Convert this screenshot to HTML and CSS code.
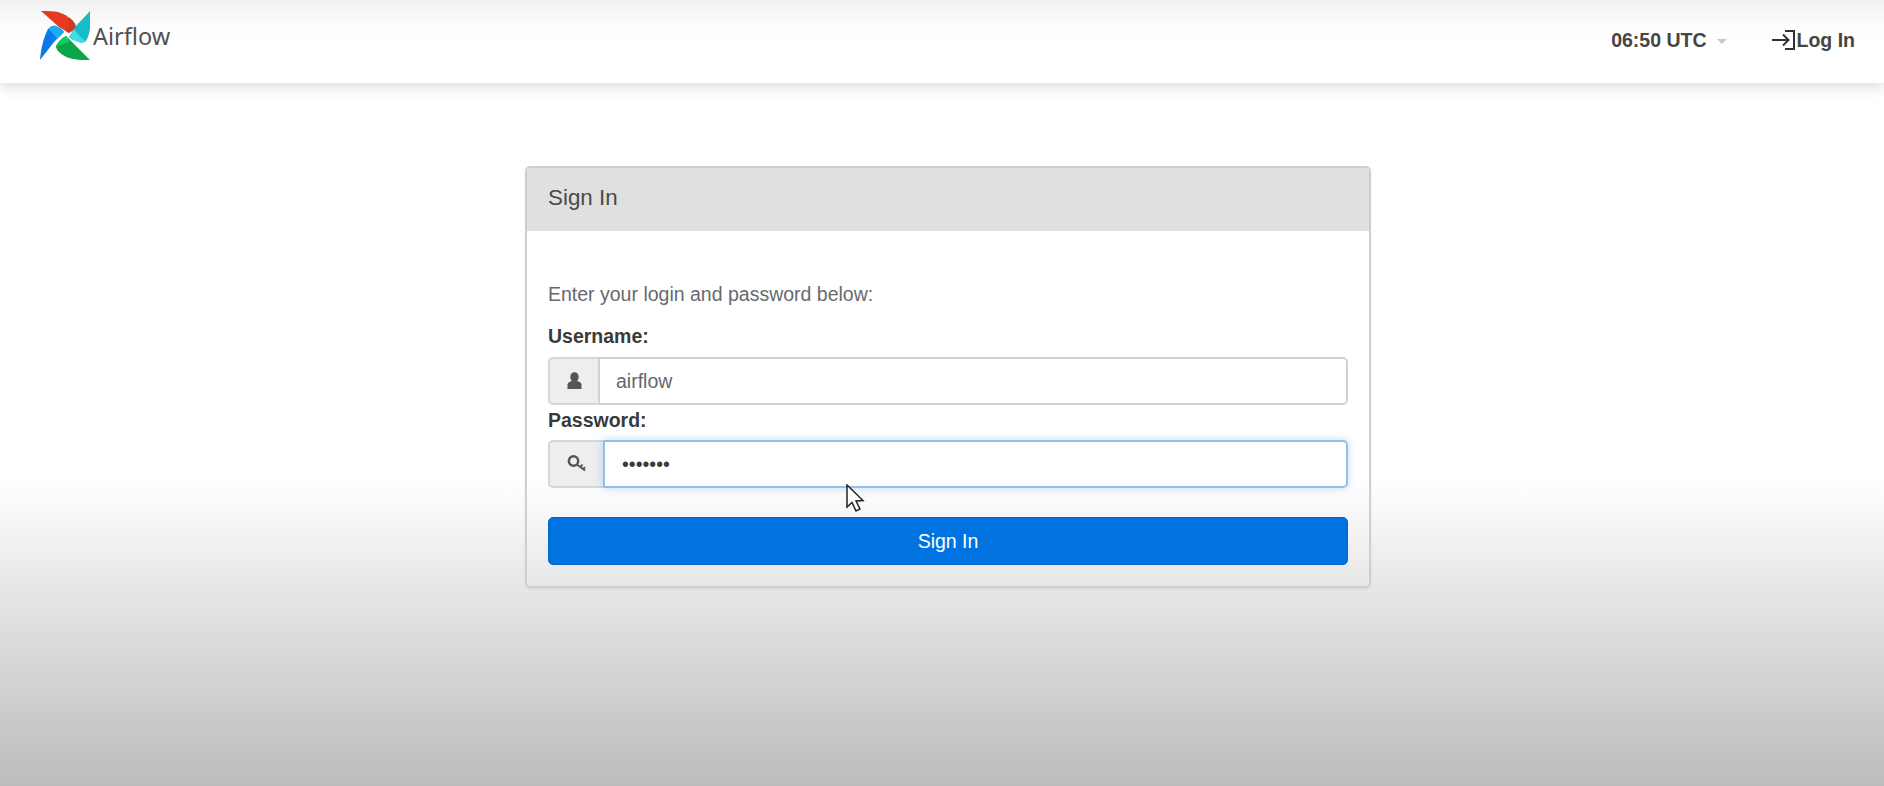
FILE: index.html
```html
<!DOCTYPE html>
<html lang="en">
<head>
<meta charset="utf-8">
<title>Airflow - Sign In</title>
<link rel="stylesheet" href="styles.css">
</head>
<body>
<header class="navbar">
  <a class="brand">
    <svg class="brand-logo" width="52" height="52" viewBox="0 0 52 52">
      <path fill="#0a78e8" d="M0 50C1 39 3 29 8 19C11 16 14 15 16 16C20 18 23 20 24 22L14 32Z"/>
      <path fill="#19aef2" d="M8 19C11 16 14 15 16 16C20 18 23 20 24 22L17 29C14 25 11 21 8 19Z"/>
      <path fill="#e33a20" d="M1 1C8 1 14 1 18 2C25 4 32 9 35 14C36 16 36 18 35 19L29 23L19 17Z"/>
      <path fill="#c83c22" d="M28 7C32 9 34 12 35 14C36 16 36 18 35 19L29 23L26 21C30 17 30 12 28 7Z"/>
      <path fill="#16bcc8" d="M50 1V19C49 24 48 28 46 31C44 33 41 33 39 32C35 31 31 29 29 27L36 16Z"/>
      <path fill="#45dbe2" d="M29 27L34 19C37 24 41 28 46 31C44 33 41 33 39 32C35 31 31 29 29 27Z"/>
      <path fill="#0ba64c" d="M50 50C44 50 38 50 33 49C27 48 22 45 19 42C17 40 16 38 16 36C18 32 22 28 26 26L36 36Z"/>
      <path fill="#14c763" d="M16 36C18 32 22 28 26 26L31 31C27 33 21 35 16 36Z"/>
    </svg>
    <span class="brand-name">Airflow</span>
  </a>
  <div class="nav-right">
    <span class="clock">06:50 UTC</span>
    <span class="caret"></span>
    <a class="login-link">
      <svg class="login-icon" width="26" height="22" viewBox="0 0 26 22">
        <path d="M1 11H17M12 5.500L17.500 11L12 16.500M14 2H23V20H14" fill="none" stroke="#333" stroke-width="2"/>
      </svg>
      <span>Log In</span>
    </a>
  </div>
</header>
<main class="content">
  <section class="panel">
    <h1 class="panel-title">Sign In</h1>
    <form class="panel-body">
      <p class="intro">Enter your login and password below:</p>
      <label class="field-label">Username:</label>
      <div class="input-group">
        <span class="addon addon-user">
          <svg width="15" height="18" viewBox="0 0 15 18"><ellipse cx="7.500" cy="5" rx="4.200" ry="4.800" fill="#555"/><path d="M0.500 17V12.500C0.500 10.500 3 9.500 5 9H10C12 9.500 14.500 10.500 14.500 12.500V17Z" fill="#555"/></svg>
        </span>
        <div class="input">airflow</div>
      </div>
      <label class="field-label field-label-tight">Password:</label>
      <div class="input-group">
        <span class="addon addon-key">
          <svg width="20" height="18" viewBox="0 0 20 18"><circle cx="6.500" cy="6" r="4.700" fill="none" stroke="#555" stroke-width="2.400"/><path d="M10 9.500L18 15.500M13.500 12L15.500 9.500M16 14.500L18 12" fill="none" stroke="#555" stroke-width="2"/></svg>
        </span>
        <div class="input input-focus">•••••••</div>
      </div>
      <button class="submit" type="button">Sign In</button>
    </form>
  </section>
</main>
<svg class="cursor" width="22" height="30" viewBox="0 0 22 30">
  <path d="M2 1V23L7 18.500L11 27L15 25L11 17L18 16.500Z" fill="#fff" stroke="#222" stroke-width="1.500"/>
</svg>
</body>
</html>
```
FILE: styles.css
```css
* { box-sizing: border-box; }
html, body { height: 100%; }
body {
  margin: 0;
  height: 786px;
  overflow: hidden;
  position: relative;
  font-family: "Liberation Sans", Arial, sans-serif;
  font-size: 19.5px;
  color: #444;
  background: linear-gradient(to bottom, #fff 0, #fff 480px, #e6e6e6 590px, #bcbcbc 786px);
}
.navbar {
  height: 83px;
  display: flex;
  align-items: center;
  justify-content: space-between;
  padding: 0 29px 8px 40px;
  background: linear-gradient(to bottom, #f1f1f1 0, #fcfcfc 25px, #fff 40px);
  box-shadow: 0 3px 14px rgba(0, 0, 0, .16);
}
.brand { display: flex; align-items: center; gap: 1px; margin-top: -4px; }
.brand-logo { display: block; }
.brand-name {
  font-family: "Noto Sans", sans-serif;
  font-size: 23.500px;
  color: #51504f;
}
.nav-right { display: flex; align-items: center; margin-top: 5px; font-weight: 700; color: #454545; }
.caret {
  width: 0;
  height: 0;
  margin: 3px 0 0 10px;
  border: 5px solid transparent;
  border-top: 5px solid #c8c8c8;
  border-bottom: 0;
}
.login-link { display: flex; align-items: center; margin-left: 44px; }
.login-icon { display: block; }
.content { padding: 83px 0 0 525px; }
.panel {
  width: 846px;
  height: 422px;
  border: 2px solid #cfcfcf;
  border-radius: 5px;
  box-shadow: 0 1px 2px rgba(0, 0, 0, .08);
}
.panel-title {
  margin: 0;
  height: 63px;
  padding: 0 21px 4px;
  display: flex;
  align-items: center;
  font-size: 22.400px;
  font-weight: 400;
  color: #4a4a4a;
  background: #e0e0e0;
}
.panel-body { padding: 0 21px; }
.intro { margin: 51px 0 0; line-height: 24px; color: #666a70; }
.field-label { display: block; margin-top: 18px; line-height: 24px; font-weight: 700; color: #3a3a3a; }
.field-label-tight { margin-top: 3px; }
.input-group { display: flex; height: 48px; margin-top: 9px; }
.field-label-tight + .input-group { margin-top: 8px; }
.addon {
  display: flex;
  align-items: center;
  justify-content: center;
  flex: none;
  background: #eeeeee;
  border: 2px solid #d6d6d6;
  border-right: 0;
  border-radius: 5px 0 0 5px;
}
.addon-user { width: 50px; }
.addon-key { width: 55px; }
.input {
  flex: 1;
  display: flex;
  align-items: center;
  padding: 0 16px;
  background: #fff;
  border: 2px solid #d2d2d2;
  border-radius: 0 5px 5px 0;
  color: #666;
}
.input-focus {
  padding: 0 17px;
  color: #3a3a3a;
  border-color: #93bfe8;
  box-shadow: 0 0 8px rgba(102, 175, 233, .45);
}
.submit {
  display: block;
  width: 100%;
  height: 48px;
  margin-top: 29px;
  font: inherit;
  color: #fff;
  background: #0073e0;
  border: 1px solid #0066c8;
  border-radius: 5px;
}
.cursor { position: absolute; left: 845px; top: 484px; }
```
